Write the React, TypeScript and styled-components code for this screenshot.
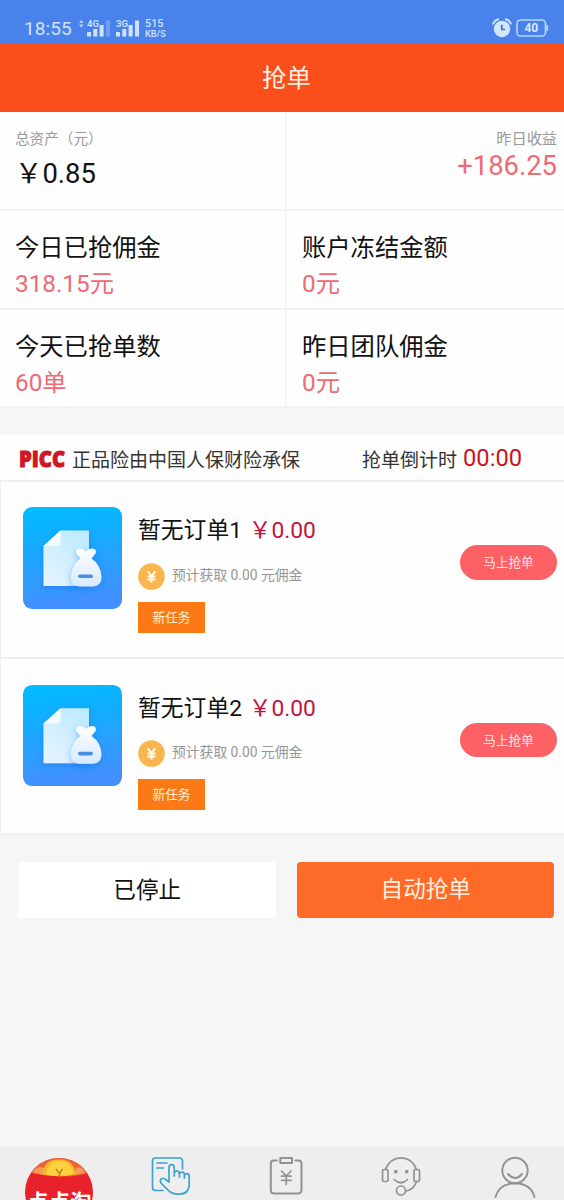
import React from 'react';
import styled, { createGlobalStyle } from 'styled-components';

const GlobalStyle = createGlobalStyle`
  * { box-sizing: border-box; }
  body {
    margin: 0;
    background: #f6f6f6;
    font-family: Roboto, "Noto Sans CJK SC", sans-serif;
    color: #111;
  }
  svg { display: block; flex: none; }
  button { font-family: inherit; border: 0; padding: 0; }
`;

const Screen = styled.div`
  width: 564px;
  height: 1200px;
  display: flex;
  flex-direction: column;
  overflow: hidden;
  background: #f6f6f6;
`;

/* ---------- status bar ---------- */
const StatusBar = styled.div`
  height: 44px;
  flex: none;
  display: flex;
  justify-content: space-between;
  align-items: center;
  padding: 12px 15px 0 24px;
  background: #4a82ec;
  color: #cfe2ff;
`;
const StatusGroup = styled.div<{ $gap?: number }>`
  display: flex;
  align-items: center;
  gap: ${(p) => p.$gap ?? 0}px;
`;
const Clock = styled.span`
  width: 54px;
  font-size: 19px;
  line-height: 24px;
  letter-spacing: 0.1px;
  padding-top: 2px;
`;
const Speed = styled.div`
  display: flex;
  flex-direction: column;
  margin-left: 4px;
  font-weight: 500;
`;
const SpeedValue = styled.span`
  font-size: 10.8px;
  line-height: 10px;
`;
const SpeedUnit = styled.span`
  font-size: 9.2px;
  line-height: 9px;
`;

/* ---------- header ---------- */
const Header = styled.header`
  height: 68px;
  flex: none;
  display: flex;
  justify-content: center;
  background: #fa4f1b;
  color: #fff2e8;
  font-size: 24.5px;
  line-height: 70px;
  padding-left: 9px;
`;

/* ---------- statistics ---------- */
const Stats = styled.section`
  flex: none;
  display: grid;
  grid-template-columns: 287px 277px;
  grid-template-rows: 99px 99px 98px;
  background: #fefefe;
`;
const Stat = styled.div<{ $right?: boolean }>`
  display: flex;
  flex-direction: column;
  align-items: ${(p) => (p.$right ? 'flex-end' : 'flex-start')};
  padding: ${(p) => (p.$right ? '0 7px 0 0' : '0 0 0 15px')};
  border-bottom: 2px solid #f1f1f1;
  white-space: nowrap;
  &:nth-child(odd) { border-right: 2px solid #f5f5f5; }
`;
const Caption = styled.span<{ $size: number }>`
  margin-top: 16px;
  font-size: ${(p) => p.$size}px;
  line-height: 22px;
  color: #999;
`;
const Balance = styled.span`
  margin-top: 8px;
  font-size: 27.4px;
  line-height: 32px;
`;
const Income = styled.span`
  font-size: 27.4px;
  line-height: 32px;
  color: #ee6a74;
`;
const StatTitle = styled.span`
  margin-top: 18px;
  font-size: 24.3px;
  line-height: 37px;
`;
const StatValue = styled.span`
  font-size: 24.3px;
  line-height: 36px;
  color: #ee6a74;
`;

/* ---------- insurance strip ---------- */
const Notice = styled.section`
  margin-top: 27px;
  height: 47px;
  flex: none;
  display: flex;
  align-items: center;
  padding: 2px 0 0 17px;
  background: #fefefe;
  border-bottom: 2px solid #f0f0f0;
  font-size: 19px;
  line-height: 43px;
  white-space: nowrap;
  color: #333;
`;
const Insurer = styled.span`
  width: 290px;
  margin-left: 5px;
  padding-top: 3px;
`;
const CountdownLabel = styled.span`
  padding-top: 3px;
`;
const Countdown = styled.span`
  margin-left: 6px;
  font-size: 23.7px;
  color: #c9161c;
`;

/* ---------- orders ---------- */
const Orders = styled.section`
  flex: none;
  background: #fefefe;
  border-left: 1px solid #eeeeee;
`;
const Order = styled.article<{ $tail?: boolean }>`
  display: flex;
  height: ${(p) => (p.$tail ? 176 : 177)}px;
  padding: ${(p) => (p.$tail ? 26 : 25)}px 7px 0 22px;
  border-bottom: 2px solid #f0f0f0;
`;
const OrderBody = styled.div`
  flex: 1;
  display: flex;
  flex-direction: column;
  align-items: flex-start;
  margin-left: 16px;
  white-space: nowrap;
`;
const OrderTitle = styled.h2`
  margin: 8px 0 0;
  font-size: 22.8px;
  line-height: 32px;
  font-weight: 400;
`;
const Price = styled.span`
  margin-left: 1px;
  color: #c4123c;
`;
const Estimate = styled.div<{ $tail?: boolean }>`
  display: flex;
  align-items: center;
  gap: 7px;
  margin-top: ${(p) => (p.$tail ? 15 : 16)}px;
  font-size: 13.8px;
  line-height: 25px;
  height: 27px;
  color: #969696;
`;
const EstimateText = styled.span`
  margin-top: -2px;
`;
const Tag = styled.span`
  margin-top: 12px;
  width: 67px;
  height: 31px;
  text-align: center;
  background: #fb7a15;
  color: #fff0dc;
  font-size: 12.7px;
  line-height: 31px;
`;
const GrabButton = styled.button<{ $tail?: boolean }>`
  width: 97px;
  height: ${(p) => (p.$tail ? 34 : 35)}px;
  margin-top: 38px;
  border-radius: 18px;
  background: #fd6065;
  color: #ffe9e6;
  font-size: 12.6px;
  line-height: 36px;
`;

/* ---------- actions ---------- */
const Actions = styled.div`
  flex: 1;
  display: flex;
  align-items: flex-start;
  gap: 21px;
  padding: 27px 10px 0 18px;
`;
const Action = styled.button<{ $primary?: boolean }>`
  flex: 1;
  height: 56px;
  border-radius: 4px;
  padding: ${(p) => (p.$primary ? '0 0 1px 1px' : '2px 0 0 1px')};
  font-size: 22.6px;
  line-height: 54px;
  background: ${(p) => (p.$primary ? '#fe6a28' : '#fff')};
  color: ${(p) => (p.$primary ? '#fff0e0' : '#111')};
`;

/* ---------- tab bar ---------- */
const TabBar = styled.nav`
  height: 53px;
  flex: none;
  display: grid;
  grid-template-columns: 118px 106px 124px 106px 122px;
  justify-items: center;
  align-items: start;
  padding-top: 9px;
  overflow: hidden;
  background: #eeeeee;
`;

const Signal = ({ label, dim }: { label: string; dim?: boolean }) => (
  <svg width="25" height="20" viewBox="0 0 25 20" fill="#cfe2ff">
    <text x="0" y="8.5" fontSize="9.5" fontWeight="600" fontFamily="Roboto">{label}</text>
    <rect x="0" y="14" width="4" height="4.5" />
    <rect x="6.3" y="11" width="4" height="7.5" />
    <rect x="12.6" y="7" width="4" height="11.5" />
    <rect x="19" y="2.5" width="4" height="16" opacity={dim ? 0.3 : 1} />
  </svg>
);

const AlarmIcon = () => (
  <svg width="20" height="20" viewBox="0 0 20 20" fill="none">
    <circle cx="10" cy="11" r="8.2" fill="#d3e6fd" />
    <path d="M1.2 5.6 Q2.7 2 6.2 1.2 M18.8 5.6 Q17.3 2 13.8 1.2" stroke="#d3e6fd" strokeWidth="1.9" strokeLinecap="round" />
    <path d="M9.8 6.8V11.5H13" stroke="#3a6fc4" strokeWidth="1.7" />
  </svg>
);

const BatteryIcon = () => (
  <svg width="33" height="18" viewBox="0 0 33 18" fill="none">
    <rect x="1" y="1" width="28.5" height="16" rx="3.5" stroke="#b9d6ff" strokeWidth="1.7" />
    <rect x="30.3" y="6" width="1.8" height="6" rx="0.8" fill="#b9d6ff" />
    <text x="15.3" y="13.2" textAnchor="middle" fontSize="12" fontWeight="700" fontFamily="Roboto" fill="#d9e9ff">40</text>
  </svg>
);

const PiccLogo = () => (
  <svg width="50" height="36" viewBox="0 0 50 36">
    <text x="2" y="26" textLength="46" lengthAdjust="spacingAndGlyphs" fontFamily="Open Sans" fontWeight="800" fontSize="22" fill="#cf1626" stroke="#cf1626" strokeWidth="1">PICC</text>
  </svg>
);

const OrderIcon = ({ id, height }: { id: string; height: number }) => (
  <svg width="99" height={height} viewBox="0 0 99 102" preserveAspectRatio="none">
    <defs>
      <linearGradient id={`${id}-bg`} x1="0" y1="0" x2="0.15" y2="1">
        <stop offset="0" stopColor="#00bdff" />
        <stop offset="0.3" stopColor="#0fb0ff" />
        <stop offset="1" stopColor="#428fff" />
      </linearGradient>
      <linearGradient id={`${id}-page`} x1="1" y1="0" x2="0.2" y2="1">
        <stop offset="0" stopColor="#b9eaff" />
        <stop offset="1" stopColor="#e4f3ff" />
      </linearGradient>
      <linearGradient id={`${id}-bag`} x1="0" y1="0" x2="0" y2="1">
        <stop offset="0" stopColor="#ffffff" />
        <stop offset="1" stopColor="#d6eaff" />
      </linearGradient>
      <filter id={`${id}-shadow`} x="-30%" y="-30%" width="160%" height="160%">
        <feDropShadow dx="0" dy="2" stdDeviation="3" floodColor="#1767d8" floodOpacity="0.4" />
      </filter>
    </defs>
    <rect width="99" height="102" rx="9" fill={`url(#${id}-bg)`} />
    <g filter={`url(#${id}-shadow)`}>
      <path d="M37.5 23.5H66V79H20.5V39Z" fill={`url(#${id}-page)`} />
      <path d="M37.5 23.5V36Q37.5 39 34 39H20.5Z" fill="#f4fbff" />
    </g>
    <g filter={`url(#${id}-shadow)`}>
      <path d="M57.5 51.5L53.5 46.5Q52 42.5 56 41.5Q60 41 63 44.5Q66 41 70 41.5Q74 42.5 72.5 46.500L68.5 51.5Q78 58 78.5 70Q78.5 79 70 79.5H56.5Q47.5 79 47.8 70Q49 58 57.5 51.5Z" fill={`url(#${id}-bag)`} />
    </g>
    <rect x="55" y="67.5" width="15" height="3.6" rx="1.8" fill="#498ee3" />
  </svg>
);

const CoinIcon = () => (
  <svg width="27" height="27" viewBox="0 0 27 27" fill="none">
    <circle cx="13.5" cy="13.5" r="13.3" fill="#f8b64d" />
    <path d="M9.8 8.3L13.5 13L17.2 8.3M13.5 13V19.6M9.6 13.4H17.4M9.6 16.5H17.4" stroke="#fffbea" strokeWidth="2" />
  </svg>
);

const LogoTab = () => (
  <svg width="70" height="70" viewBox="0 0 70 70">
    <defs>
      <clipPath id="logo-disc"><circle cx="35" cy="36" r="34" /></clipPath>
    </defs>
    <g clipPath="url(#logo-disc)">
      <rect width="70" height="70" fill="#e9212b" />
      <path d="M0 0H70V16Q52 21 35 20.5Q18 20 0 15Z" fill="#ee6535" />
      <path d="M9 17Q12 9 20 12L22 19ZM50 19L52 12Q59 10 61 17Z" fill="#f49a55" />
      <path d="M18 18.5Q20 3.5 35 3.5Q50 3.5 52 18.5Q36 22 18 18.5Z" fill="#f5b62b" />
      <path d="M22 18.5Q24 5 36 5Q48 5 49 18.500Q36 21 22 18.5Z" fill="#fbd13c" />
      <path d="M32 13L35.5 17.5L38.5 13M35.5 17V20" stroke="#b98420" strokeWidth="1.5" fill="none" />
    </g>
    <text x="3" y="54" fontSize="21.5" fontWeight="700" fontFamily="Noto Sans CJK SC" fill="#fff">点点淘</text>
  </svg>
);

const GrabTab = () => (
  <svg width="40" height="40" viewBox="0 0 40 40" fill="none" stroke="#3ba3cd" strokeWidth="1.7" strokeLinecap="round" strokeLinejoin="round">
    <path d="M12 34.5H4.5Q1.5 34.5 1.5 31.5V5Q1.5 2 4.5 2H28.5Q31.5 2 31.5 5V13" />
    <path d="M6 7H16M6 12H12.5" />
    <path d="M18 26V12Q18 8.7 20.7 8.7Q23.3 8.700 23.3 12V20V17.5Q23.6 15 26 15Q28.4 15.2 28.4 18V21V18.5Q28.700 16 31 16Q33.400 16.200 33.400 19V22V20Q33.700 17.500 35.800 17.700Q38.200 18 38.200 20.500V30Q37 37.700 29 38.200H25Q21 38 17.500 34.500L10 27Q8.500 24.500 10.500 22.700Q12.500 21.500 14.500 23.500Z" />
  </svg>
);

const OrderTab = () => (
  <svg width="34" height="40" viewBox="0 0 34 40" fill="none" stroke="#929292" strokeWidth="2" strokeLinecap="round" strokeLinejoin="round">
    <path d="M8 4.5H5Q1.8 4.5 1.8 7.7V33.5Q1.8 37.5 5 37.5H29Q32.500 37.5 32.500 33.5V7.7Q32.500 4.5 29 4.5H26.5" />
    <rect x="11.3" y="2" width="11.7" height="5" />
    <path d="M12.5 15L17.2 20L22 15M17.2 20V28.5M12.5 20.2H22M12.5 24.3H22" strokeWidth="1.7" />
  </svg>
);

const ServiceTab = () => (
  <svg width="40" height="40" viewBox="0 0 40 40" fill="none" stroke="#929292" strokeWidth="1.7" strokeLinecap="round">
    <path d="M4.5 13.5Q9 1.8 20 1.8Q31 1.8 35.5 13.5" />
    <rect x="1.5" y="13.5" width="5.5" height="12" rx="1.5" />
    <rect x="33" y="13.5" width="5.5" height="12" rx="1.5" />
    <path d="M13 23.5Q20 30 26.5 23.5M35.5 25.5Q32.5 34 25 35" />
    <circle cx="20" cy="34.5" r="4.5" />
    <path d="M14 14.8h1.500v1.500h-1.500zM25 14.8h1.500v1.500h-1.500z" fill="#929292" />
  </svg>
);

const ProfileTab = () => (
  <svg width="42" height="44" viewBox="0 0 42 44" fill="none" stroke="#929292" strokeWidth="1.9" strokeLinecap="round">
    <circle cx="21" cy="14.5" r="12.7" />
    <path d="M14 18Q21 26 28 18M1.5 41Q5 27.5 21 27.2Q37 27.5 40.5 41" />
  </svg>
);

const stats = [
  ['今日已抢佣金', '318.15元'],
  ['账户冻结金额', '0元'],
  ['今天已抢单数', '60单'],
  ['昨日团队佣金', '0元'],
];

export default function App() {
  return (
    <Screen>
      <GlobalStyle />
      <StatusBar>
        <StatusGroup>
          <Clock>18:55</Clock>
          <svg width="9" height="20" viewBox="0 0 9 20" fill="#b9d6ff">
            <path d="M1 5L3.3 2L5.6 5ZM1 6.5H5.6L3.3 9.5Z" />
          </svg>
          <StatusGroup $gap={4}>
            <Signal label="4G" dim />
            <Signal label="3G" />
          </StatusGroup>
          <Speed>
            <SpeedValue>515</SpeedValue>
            <SpeedUnit>KB/S</SpeedUnit>
          </Speed>
        </StatusGroup>
        <StatusGroup $gap={4}>
          <AlarmIcon />
          <BatteryIcon />
        </StatusGroup>
      </StatusBar>
      <Header>抢单</Header>
      <Stats>
        <Stat>
          <Caption $size={14.6}>总资产（元）</Caption>
          <Balance>￥0.85</Balance>
        </Stat>
        <Stat $right>
          <Caption $size={15.2}>昨日收益</Caption>
          <Income>+186.25</Income>
        </Stat>
        {stats.map(([title, value]) => (
          <Stat key={title}>
            <StatTitle>{title}</StatTitle>
            <StatValue>{value}</StatValue>
          </Stat>
        ))}
      </Stats>
      <Notice>
        <PiccLogo />
        <Insurer>正品险由中国人保财险承保</Insurer>
        <CountdownLabel>抢单倒计时</CountdownLabel>
        <Countdown>00:00</Countdown>
      </Notice>
      <Orders>
        {[1, 2].map((n) => (
          <Order key={n} $tail={n === 2}>
            <OrderIcon id={`order-${n}`} height={n === 2 ? 101 : 102} />
            <OrderBody>
              <OrderTitle>暂无订单{n} <Price>￥0.00</Price></OrderTitle>
              <Estimate $tail={n === 2}>
                <CoinIcon />
                <EstimateText>预计获取 0.00 元佣金</EstimateText>
              </Estimate>
              <Tag>新任务</Tag>
            </OrderBody>
            <GrabButton $tail={n === 2}>马上抢单</GrabButton>
          </Order>
        ))}
      </Orders>
      <Actions>
        <Action>已停止</Action>
        <Action $primary>自动抢单</Action>
      </Actions>
      <TabBar>
        <LogoTab />
        <GrabTab />
        <OrderTab />
        <ServiceTab />
        <ProfileTab />
      </TabBar>
    </Screen>
  );
}
